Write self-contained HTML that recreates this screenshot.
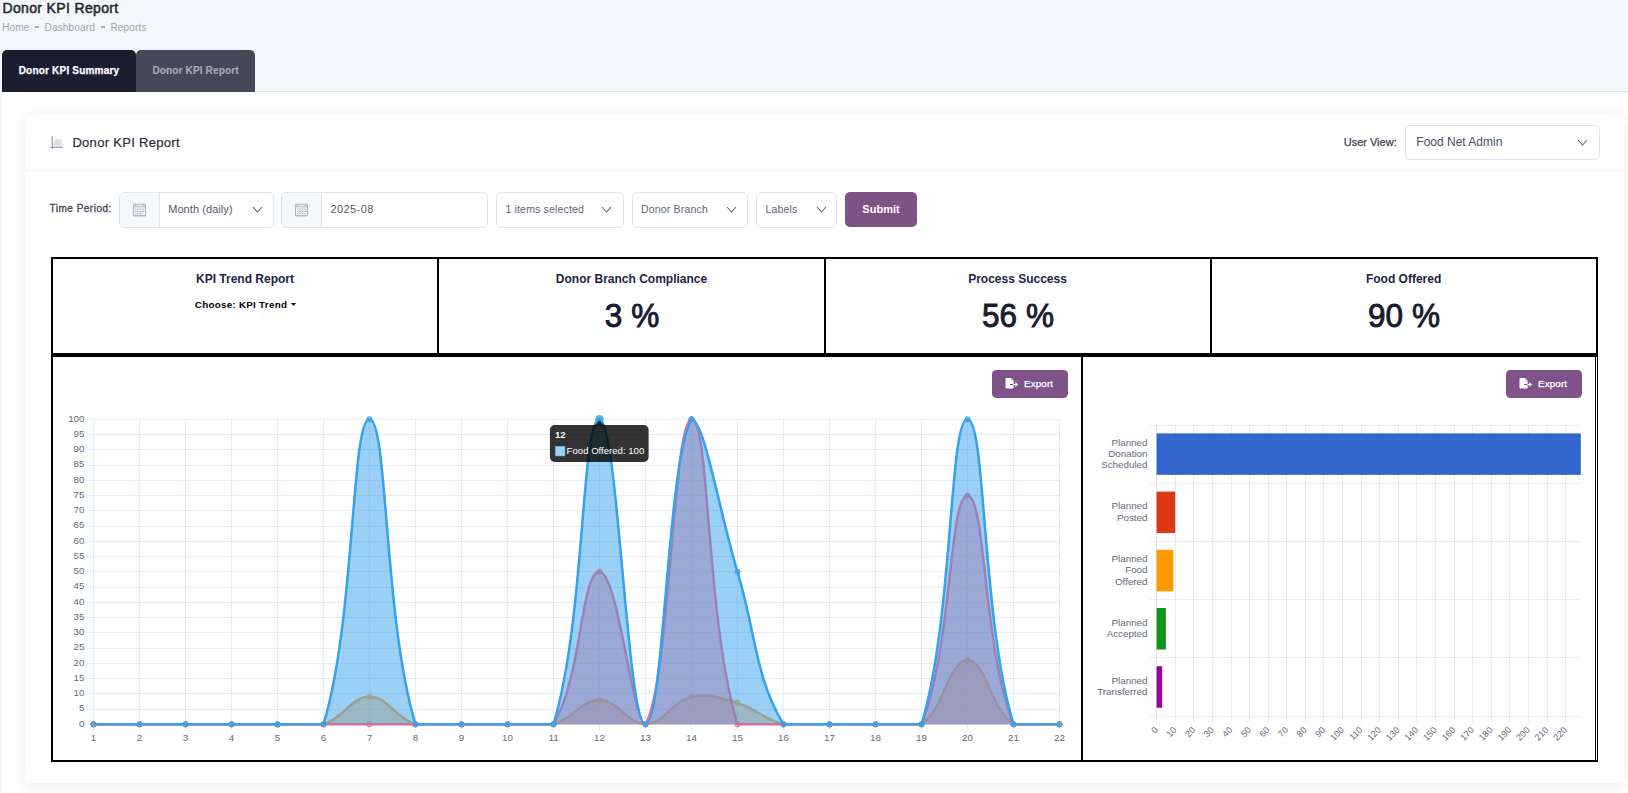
<!DOCTYPE html>
<html><head><meta charset="utf-8"><title>Donor KPI Report</title>
<style>
html,body{margin:0;padding:0;}
body{width:1628px;height:793px;overflow:hidden;position:relative;background:#f3f6fa;font-family:"Liberation Sans",sans-serif;}
.r{position:absolute;}
.t{position:absolute;white-space:nowrap;line-height:1;}
svg text{font-family:"Liberation Sans",sans-serif;}
.tk{font-size:9.8px;fill:#646a7a;}
</style></head><body>
<div class="t" style="top:0.95px;font-size:14.00px;color:#26272f;font-weight:400;letter-spacing:0.35px;left:2.50px;-webkit-text-stroke:0.5px #26272f;">Donor KPI Report</div>
<div class="t" style="top:22.73px;font-size:10.00px;color:#a1a5b7;font-weight:400;letter-spacing:0.05px;left:2.30px;">Home</div>
<div class="r" style="left:34.90px;top:26.40px;width:4.00px;height:1.50px;background:#a8acbd;"></div>
<div class="t" style="top:22.73px;font-size:10.00px;color:#a1a5b7;font-weight:400;letter-spacing:0.15px;left:44.60px;">Dashboard</div>
<div class="r" style="left:101.20px;top:26.40px;width:4.00px;height:1.50px;background:#a8acbd;"></div>
<div class="t" style="top:22.73px;font-size:10.00px;color:#a1a5b7;font-weight:400;letter-spacing:0.12px;left:110.50px;">Reports</div>
<div class="r" style="left:2.00px;top:50.00px;width:134.00px;height:42.00px;background:#1b1e31;border-radius:5px 5px 0 0;"></div>
<div class="r" style="left:136.00px;top:50.00px;width:119.00px;height:42.00px;background:#464859;border-radius:5px 5px 0 0;"></div>
<div class="t" style="top:65.94px;font-size:10.00px;color:#ffffff;font-weight:700;letter-spacing:0.20px;left:2.00px;width:134.00px;text-align:center;-webkit-text-stroke:0.25px #fff;">Donor KPI Summary</div>
<div class="t" style="top:65.94px;font-size:10.00px;color:#a6a7b1;font-weight:700;letter-spacing:0.15px;left:136.10px;width:119.00px;text-align:center;-webkit-text-stroke:0.2px #a6a7b1;">Donor KPI Report</div>
<div class="r" style="left:255.00px;top:91.00px;width:1373.00px;height:1.00px;background:#e3e5ea;"></div>
<div class="r" style="left:2.00px;top:92.00px;width:1626.00px;height:701.00px;background:#ffffff;"></div>
<div class="r" style="left:25.00px;top:115.00px;width:1599.00px;height:668.00px;background:#fff;border-radius:6px;box-shadow:0 3px 18px rgba(0,0,0,0.075);"></div>
<div class="r" style="left:25.00px;top:170.00px;width:1599.00px;height:1.00px;background:#eef1f5;"></div>
<svg class="r" style="left:46px;top:132px" width="22" height="20" viewBox="0 0 22 20">
<path d="M7.4 14.8 V10.6 L10.9 6.3 L15.9 8.2 V14.8 Z" fill="#e0e2e8"/>
<path d="M6.3 4.3 V16.9" fill="none" stroke="#a4a7b9" stroke-width="1.3"/>
<path d="M4.2 15.4 H16.9" fill="none" stroke="#a4a7b9" stroke-width="1.3"/>
</svg>
<div class="t" style="top:135.60px;font-size:13.00px;color:#2b2e3a;font-weight:400;letter-spacing:0.30px;left:72.40px;-webkit-text-stroke:0.2px #2b2e3a;">Donor KPI Report</div>
<div class="t" style="top:136.99px;font-size:11.00px;color:#3f4254;font-weight:400;left:1196.70px;width:200.00px;text-align:right;-webkit-text-stroke:0.25px #3f4254;">User View:</div>
<div class="r" style="left:1405.00px;top:125.00px;width:195.00px;height:34.50px;border:1px solid #e1e3ea;border-radius:5px;box-sizing:border-box;"></div>
<div class="t" style="top:136.14px;font-size:12.00px;color:#4b4f63;font-weight:400;left:1416.30px;">Food Net Admin</div>
<svg class="r" style="left:1576.5px;top:139.0px" width="11" height="7" viewBox="0 0 11 7"><path d="M1 1 L5.5 6.0 L10.0 1" fill="none" stroke="#5e6278" stroke-width="1.1"/></svg>
<div class="t" style="top:203.73px;font-size:10.00px;color:#3f4254;font-weight:400;letter-spacing:0.50px;left:49.50px;-webkit-text-stroke:0.3px #3f4254;">Time Period:</div>
<div class="r" style="left:119.40px;top:192.00px;width:154.30px;height:35.50px;border:1px solid #e1e3ea;border-radius:5px;box-sizing:border-box;"></div><div class="r" style="left:120.40px;top:193.00px;width:39.00px;height:33.50px;background:#f5f8fa;border-radius:4px 0 0 4px;"></div><div class="r" style="left:159.40px;top:192.00px;width:1.00px;height:35.50px;background:#e1e3ea;"></div><svg class="r" style="left:130.0px;top:200.0px" width="20" height="20" viewBox="0 0 20 20">
<rect x="3.5" y="4.3" width="12" height="11.6" rx="0.8" fill="#f8f9fc" stroke="#a9aec0" stroke-width="1"/>
<rect x="3.5" y="4.3" width="12" height="3.2" fill="#c3c7d4"/>
<rect x="6.6" y="5.2" width="5.8" height="1.1" fill="#eceef3"/>
<rect x="5" y="3.2" width="1" height="1.3" fill="#b6bac9"/><rect x="12.9" y="3.2" width="1" height="1.3" fill="#b6bac9"/>
<rect x="3.5" y="15" width="12" height="1.1" fill="#b3b8c8"/>
<g fill="#a3a9bc"><rect x="5.2" y="8.6" width="1.1" height="1.1"/><rect x="6.8" y="8.6" width="1.1" height="1.1"/><rect x="8.4" y="8.6" width="1.1" height="1.1"/><rect x="10.0" y="8.6" width="1.1" height="1.1"/><rect x="11.6" y="8.6" width="1.1" height="1.1"/><rect x="13.2" y="8.6" width="1.1" height="1.1"/><rect x="5.2" y="10.9" width="1.1" height="1.1"/><rect x="6.8" y="10.9" width="1.1" height="1.1"/><rect x="8.4" y="10.9" width="1.1" height="1.1"/><rect x="10.0" y="10.9" width="1.1" height="1.1"/><rect x="11.6" y="10.9" width="1.1" height="1.1"/><rect x="13.2" y="10.9" width="1.1" height="1.1"/><rect x="5.2" y="13.1" width="1.1" height="1.1"/><rect x="6.8" y="13.1" width="1.1" height="1.1"/><rect x="8.4" y="13.1" width="1.1" height="1.1"/><rect x="10.0" y="13.1" width="1.1" height="1.1"/><rect x="11.6" y="13.1" width="1.1" height="1.1"/></g>
</svg><div class="t" style="top:204.09px;font-size:11.00px;color:#55596c;font-weight:400;letter-spacing:0.07px;left:168.20px;">Month (daily)</div>
<svg class="r" style="left:252.0px;top:206.3px" width="11" height="7" viewBox="0 0 11 7"><path d="M1 1 L5.5 6.0 L10.0 1" fill="none" stroke="#5e6278" stroke-width="1.1"/></svg>
<div class="r" style="left:281.00px;top:192.00px;width:206.70px;height:35.50px;border:1px solid #e1e3ea;border-radius:5px;box-sizing:border-box;"></div><div class="r" style="left:282.00px;top:193.00px;width:39.00px;height:33.50px;background:#f5f8fa;border-radius:4px 0 0 4px;"></div><div class="r" style="left:321.00px;top:192.00px;width:1.00px;height:35.50px;background:#e1e3ea;"></div><svg class="r" style="left:291.6px;top:200.0px" width="20" height="20" viewBox="0 0 20 20">
<rect x="3.5" y="4.3" width="12" height="11.6" rx="0.8" fill="#f8f9fc" stroke="#a9aec0" stroke-width="1"/>
<rect x="3.5" y="4.3" width="12" height="3.2" fill="#c3c7d4"/>
<rect x="6.6" y="5.2" width="5.8" height="1.1" fill="#eceef3"/>
<rect x="5" y="3.2" width="1" height="1.3" fill="#b6bac9"/><rect x="12.9" y="3.2" width="1" height="1.3" fill="#b6bac9"/>
<rect x="3.5" y="15" width="12" height="1.1" fill="#b3b8c8"/>
<g fill="#a3a9bc"><rect x="5.2" y="8.6" width="1.1" height="1.1"/><rect x="6.8" y="8.6" width="1.1" height="1.1"/><rect x="8.4" y="8.6" width="1.1" height="1.1"/><rect x="10.0" y="8.6" width="1.1" height="1.1"/><rect x="11.6" y="8.6" width="1.1" height="1.1"/><rect x="13.2" y="8.6" width="1.1" height="1.1"/><rect x="5.2" y="10.9" width="1.1" height="1.1"/><rect x="6.8" y="10.9" width="1.1" height="1.1"/><rect x="8.4" y="10.9" width="1.1" height="1.1"/><rect x="10.0" y="10.9" width="1.1" height="1.1"/><rect x="11.6" y="10.9" width="1.1" height="1.1"/><rect x="13.2" y="10.9" width="1.1" height="1.1"/><rect x="5.2" y="13.1" width="1.1" height="1.1"/><rect x="6.8" y="13.1" width="1.1" height="1.1"/><rect x="8.4" y="13.1" width="1.1" height="1.1"/><rect x="10.0" y="13.1" width="1.1" height="1.1"/><rect x="11.6" y="13.1" width="1.1" height="1.1"/></g>
</svg><div class="t" style="top:204.09px;font-size:11.00px;color:#55596c;font-weight:400;letter-spacing:0.40px;left:330.50px;">2025-08</div>
<div class="r" style="left:496.00px;top:192.00px;width:127.50px;height:35.50px;border:1px solid #e1e3ea;border-radius:5px;box-sizing:border-box;"></div><div class="t" style="top:204.31px;font-size:10.50px;color:#62667a;font-weight:400;letter-spacing:0.18px;left:505.40px;">1 items selected</div><svg class="r" style="left:601.0px;top:206.3px" width="11" height="7" viewBox="0 0 11 7"><path d="M1 1 L5.5 6.0 L10.0 1" fill="none" stroke="#5e6278" stroke-width="1.1"/></svg>
<div class="r" style="left:632.30px;top:192.00px;width:115.30px;height:35.50px;border:1px solid #e1e3ea;border-radius:5px;box-sizing:border-box;"></div><div class="t" style="top:204.31px;font-size:10.50px;color:#62667a;font-weight:400;letter-spacing:0.18px;left:641.00px;">Donor Branch</div><svg class="r" style="left:726.0px;top:206.3px" width="11" height="7" viewBox="0 0 11 7"><path d="M1 1 L5.5 6.0 L10.0 1" fill="none" stroke="#5e6278" stroke-width="1.1"/></svg>
<div class="r" style="left:756.00px;top:192.00px;width:81.40px;height:35.50px;border:1px solid #e1e3ea;border-radius:5px;box-sizing:border-box;"></div><div class="t" style="top:204.31px;font-size:10.50px;color:#62667a;font-weight:400;letter-spacing:0.18px;left:765.40px;">Labels</div><svg class="r" style="left:815.5px;top:206.3px" width="11" height="7" viewBox="0 0 11 7"><path d="M1 1 L5.5 6.0 L10.0 1" fill="none" stroke="#5e6278" stroke-width="1.1"/></svg>
<div class="r" style="left:845.00px;top:192.00px;width:72.00px;height:35.00px;background:#7f5286;border-radius:5px;"></div>
<div class="t" style="top:203.99px;font-size:11.00px;color:#ffffff;font-weight:700;left:845.00px;width:72.00px;text-align:center;">Submit</div>
<div class="r" style="left:51.00px;top:257.00px;width:1547.00px;height:2.00px;background:#000;"></div>
<div class="r" style="left:51.00px;top:353.00px;width:1547.00px;height:2.00px;background:#000;"></div>
<div class="r" style="left:51.00px;top:257.00px;width:2.00px;height:98.00px;background:#000;"></div>
<div class="r" style="left:437.00px;top:257.00px;width:2.00px;height:98.00px;background:#000;"></div>
<div class="r" style="left:824.00px;top:257.00px;width:2.00px;height:98.00px;background:#000;"></div>
<div class="r" style="left:1210.00px;top:257.00px;width:2.00px;height:98.00px;background:#000;"></div>
<div class="r" style="left:1596.00px;top:257.00px;width:2.00px;height:98.00px;background:#000;"></div>
<div class="t" style="top:272.54px;font-size:12.00px;color:#1e2447;font-weight:700;left:55.00px;width:380.00px;text-align:center;">KPI Trend Report</div>
<div class="t" style="top:299.80px;font-size:9.80px;color:#000;font-weight:700;letter-spacing:0.28px;left:91.00px;width:300.00px;text-align:center;">Choose: KPI Trend</div>
<svg class="r" style="left:290px;top:302.2px" width="7" height="5" viewBox="0 0 7 5"><path d="M0.8 1 L6.2 1 L3.5 3.7 Z" fill="#000"/></svg>
<div class="t" style="top:272.74px;font-size:12.00px;color:#1e2447;font-weight:700;left:441.50px;width:380.00px;text-align:center;">Donor Branch Compliance</div>
<div class="t" style="top:298.97px;font-size:33.00px;color:#171a30;font-weight:400;left:441.50px;width:380.00px;text-align:center;-webkit-text-stroke:0.9px #171a30;transform:scaleX(0.955);">3 %</div>
<div class="t" style="top:272.74px;font-size:12.00px;color:#1e2447;font-weight:700;left:827.50px;width:380.00px;text-align:center;">Process Success</div>
<div class="t" style="top:298.97px;font-size:33.00px;color:#171a30;font-weight:400;left:827.50px;width:380.00px;text-align:center;-webkit-text-stroke:0.9px #171a30;transform:scaleX(0.955);">56 %</div>
<div class="t" style="top:272.74px;font-size:12.00px;color:#1e2447;font-weight:700;left:1213.60px;width:380.00px;text-align:center;">Food Offered</div>
<div class="t" style="top:298.97px;font-size:33.00px;color:#171a30;font-weight:400;left:1213.60px;width:380.00px;text-align:center;-webkit-text-stroke:0.9px #171a30;transform:scaleX(0.955);">90 %</div>
<div class="r" style="left:51.00px;top:355.00px;width:2.00px;height:407.00px;background:#000;"></div>
<div class="r" style="left:51.00px;top:355.00px;width:1547.00px;height:2.00px;background:#000;"></div>
<div class="r" style="left:51.00px;top:760.00px;width:1547.00px;height:2.00px;background:#000;"></div>
<div class="r" style="left:1081.00px;top:355.00px;width:2.00px;height:407.00px;background:#000;"></div>
<div class="r" style="left:1595.00px;top:357.00px;width:1.00px;height:404.00px;background:#000;"></div>
<div class="r" style="left:1597.00px;top:355.00px;width:1.00px;height:407.00px;background:#000;"></div>
<div class="r" style="left:992.00px;top:370.00px;width:76.00px;height:28.00px;background:#80528a;border-radius:4.5px;"></div><svg class="r" style="left:1005.0px;top:377px" width="14" height="13" viewBox="0 0 14 13">
<path d="M0.5 1.8 Q0.5 1 1.3 1 H6 L8.6 3.6 V10.8 Q8.6 11.6 7.8 11.6 H1.3 Q0.5 11.6 0.5 10.8 Z" fill="#fff"/>
<path d="M6 1 V3.6 H8.6 Z" fill="#cdb8d2"/>
<rect x="4.9" y="7" width="3.7" height="1" fill="#82548a"/>
<rect x="8.6" y="7" width="2.4" height="1" fill="#fff"/>
<path d="M10.4 4.9 L13 7.5 L10.4 10.1 Z" fill="#fff"/>
</svg><div class="t" style="top:378.90px;font-size:9.80px;color:#ffffff;font-weight:400;letter-spacing:0.15px;left:1024.00px;-webkit-text-stroke:0.25px #fff;">Export</div>
<div class="r" style="left:1506.00px;top:370.00px;width:76.00px;height:28.00px;background:#80528a;border-radius:4.5px;"></div><svg class="r" style="left:1519.0px;top:377px" width="14" height="13" viewBox="0 0 14 13">
<path d="M0.5 1.8 Q0.5 1 1.3 1 H6 L8.6 3.6 V10.8 Q8.6 11.6 7.8 11.6 H1.3 Q0.5 11.6 0.5 10.8 Z" fill="#fff"/>
<path d="M6 1 V3.6 H8.6 Z" fill="#cdb8d2"/>
<rect x="4.9" y="7" width="3.7" height="1" fill="#82548a"/>
<rect x="8.6" y="7" width="2.4" height="1" fill="#fff"/>
<path d="M10.4 4.9 L13 7.5 L10.4 10.1 Z" fill="#fff"/>
</svg><div class="t" style="top:378.90px;font-size:9.80px;color:#ffffff;font-weight:400;letter-spacing:0.15px;left:1538.00px;-webkit-text-stroke:0.25px #fff;">Export</div>
<svg class="r" style="left:0;top:0" width="1628" height="793" viewBox="0 0 1628 793">
<defs><clipPath id="ca"><rect x="93.5" y="400" width="970" height="324.3"/></clipPath></defs>
<line x1="87" y1="724.5" x2="1059.5" y2="724.5" stroke="#e5ecf3" stroke-width="1"/>
<line x1="87" y1="709.5" x2="1059.5" y2="709.5" stroke="#e5ecf3" stroke-width="1"/>
<line x1="87" y1="693.5" x2="1059.5" y2="693.5" stroke="#e5ecf3" stroke-width="1"/>
<line x1="87" y1="678.5" x2="1059.5" y2="678.5" stroke="#e5ecf3" stroke-width="1"/>
<line x1="87" y1="663.5" x2="1059.5" y2="663.5" stroke="#e5ecf3" stroke-width="1"/>
<line x1="87" y1="648.5" x2="1059.5" y2="648.5" stroke="#e5ecf3" stroke-width="1"/>
<line x1="87" y1="632.5" x2="1059.5" y2="632.5" stroke="#e5ecf3" stroke-width="1"/>
<line x1="87" y1="617.5" x2="1059.5" y2="617.5" stroke="#e5ecf3" stroke-width="1"/>
<line x1="87" y1="602.5" x2="1059.5" y2="602.5" stroke="#e5ecf3" stroke-width="1"/>
<line x1="87" y1="587.5" x2="1059.5" y2="587.5" stroke="#e5ecf3" stroke-width="1"/>
<line x1="87" y1="571.5" x2="1059.5" y2="571.5" stroke="#e5ecf3" stroke-width="1"/>
<line x1="87" y1="556.5" x2="1059.5" y2="556.5" stroke="#e5ecf3" stroke-width="1"/>
<line x1="87" y1="541.5" x2="1059.5" y2="541.5" stroke="#e5ecf3" stroke-width="1"/>
<line x1="87" y1="526.5" x2="1059.5" y2="526.5" stroke="#e5ecf3" stroke-width="1"/>
<line x1="87" y1="510.5" x2="1059.5" y2="510.5" stroke="#e5ecf3" stroke-width="1"/>
<line x1="87" y1="495.5" x2="1059.5" y2="495.5" stroke="#e5ecf3" stroke-width="1"/>
<line x1="87" y1="480.5" x2="1059.5" y2="480.5" stroke="#e5ecf3" stroke-width="1"/>
<line x1="87" y1="465.5" x2="1059.5" y2="465.5" stroke="#e5ecf3" stroke-width="1"/>
<line x1="87" y1="449.5" x2="1059.5" y2="449.5" stroke="#e5ecf3" stroke-width="1"/>
<line x1="87" y1="434.5" x2="1059.5" y2="434.5" stroke="#e5ecf3" stroke-width="1"/>
<line x1="87" y1="419.5" x2="1059.5" y2="419.5" stroke="#e5ecf3" stroke-width="1"/>
<line x1="93.5" y1="419.3" x2="93.5" y2="730.5" stroke="#e5ecf3" stroke-width="1"/>
<line x1="139.5" y1="419.3" x2="139.5" y2="730.5" stroke="#e5ecf3" stroke-width="1"/>
<line x1="185.5" y1="419.3" x2="185.5" y2="730.5" stroke="#e5ecf3" stroke-width="1"/>
<line x1="231.5" y1="419.3" x2="231.5" y2="730.5" stroke="#e5ecf3" stroke-width="1"/>
<line x1="277.5" y1="419.3" x2="277.5" y2="730.5" stroke="#e5ecf3" stroke-width="1"/>
<line x1="323.5" y1="419.3" x2="323.5" y2="730.5" stroke="#e5ecf3" stroke-width="1"/>
<line x1="369.5" y1="419.3" x2="369.5" y2="730.5" stroke="#e5ecf3" stroke-width="1"/>
<line x1="415.5" y1="419.3" x2="415.5" y2="730.5" stroke="#e5ecf3" stroke-width="1"/>
<line x1="461.5" y1="419.3" x2="461.5" y2="730.5" stroke="#e5ecf3" stroke-width="1"/>
<line x1="507.5" y1="419.3" x2="507.5" y2="730.5" stroke="#e5ecf3" stroke-width="1"/>
<line x1="553.5" y1="419.3" x2="553.5" y2="730.5" stroke="#e5ecf3" stroke-width="1"/>
<line x1="599.5" y1="419.3" x2="599.5" y2="730.5" stroke="#e5ecf3" stroke-width="1"/>
<line x1="645.5" y1="419.3" x2="645.5" y2="730.5" stroke="#e5ecf3" stroke-width="1"/>
<line x1="691.5" y1="419.3" x2="691.5" y2="730.5" stroke="#e5ecf3" stroke-width="1"/>
<line x1="737.5" y1="419.3" x2="737.5" y2="730.5" stroke="#e5ecf3" stroke-width="1"/>
<line x1="783.5" y1="419.3" x2="783.5" y2="730.5" stroke="#e5ecf3" stroke-width="1"/>
<line x1="829.5" y1="419.3" x2="829.5" y2="730.5" stroke="#e5ecf3" stroke-width="1"/>
<line x1="875.5" y1="419.3" x2="875.5" y2="730.5" stroke="#e5ecf3" stroke-width="1"/>
<line x1="921.5" y1="419.3" x2="921.5" y2="730.5" stroke="#e5ecf3" stroke-width="1"/>
<line x1="967.5" y1="419.3" x2="967.5" y2="730.5" stroke="#e5ecf3" stroke-width="1"/>
<line x1="1013.5" y1="419.3" x2="1013.5" y2="730.5" stroke="#e5ecf3" stroke-width="1"/>
<line x1="1059.5" y1="419.3" x2="1059.5" y2="730.5" stroke="#e5ecf3" stroke-width="1"/>
<text x="84.5" y="726.70" text-anchor="end" class="tk">0</text>
<text x="84.5" y="711.45" text-anchor="end" class="tk">5</text>
<text x="84.5" y="696.20" text-anchor="end" class="tk">10</text>
<text x="84.5" y="680.95" text-anchor="end" class="tk">15</text>
<text x="84.5" y="665.70" text-anchor="end" class="tk">20</text>
<text x="84.5" y="650.45" text-anchor="end" class="tk">25</text>
<text x="84.5" y="635.20" text-anchor="end" class="tk">30</text>
<text x="84.5" y="619.95" text-anchor="end" class="tk">35</text>
<text x="84.5" y="604.70" text-anchor="end" class="tk">40</text>
<text x="84.5" y="589.45" text-anchor="end" class="tk">45</text>
<text x="84.5" y="574.20" text-anchor="end" class="tk">50</text>
<text x="84.5" y="558.95" text-anchor="end" class="tk">55</text>
<text x="84.5" y="543.70" text-anchor="end" class="tk">60</text>
<text x="84.5" y="528.45" text-anchor="end" class="tk">65</text>
<text x="84.5" y="513.20" text-anchor="end" class="tk">70</text>
<text x="84.5" y="497.95" text-anchor="end" class="tk">75</text>
<text x="84.5" y="482.70" text-anchor="end" class="tk">80</text>
<text x="84.5" y="467.45" text-anchor="end" class="tk">85</text>
<text x="84.5" y="452.20" text-anchor="end" class="tk">90</text>
<text x="84.5" y="436.95" text-anchor="end" class="tk">95</text>
<text x="84.5" y="421.70" text-anchor="end" class="tk">100</text>
<text x="93.50" y="740.8" text-anchor="middle" class="tk">1</text>
<text x="139.50" y="740.8" text-anchor="middle" class="tk">2</text>
<text x="185.50" y="740.8" text-anchor="middle" class="tk">3</text>
<text x="231.50" y="740.8" text-anchor="middle" class="tk">4</text>
<text x="277.50" y="740.8" text-anchor="middle" class="tk">5</text>
<text x="323.50" y="740.8" text-anchor="middle" class="tk">6</text>
<text x="369.50" y="740.8" text-anchor="middle" class="tk">7</text>
<text x="415.50" y="740.8" text-anchor="middle" class="tk">8</text>
<text x="461.50" y="740.8" text-anchor="middle" class="tk">9</text>
<text x="507.50" y="740.8" text-anchor="middle" class="tk">10</text>
<text x="553.50" y="740.8" text-anchor="middle" class="tk">11</text>
<text x="599.50" y="740.8" text-anchor="middle" class="tk">12</text>
<text x="645.50" y="740.8" text-anchor="middle" class="tk">13</text>
<text x="691.50" y="740.8" text-anchor="middle" class="tk">14</text>
<text x="737.50" y="740.8" text-anchor="middle" class="tk">15</text>
<text x="783.50" y="740.8" text-anchor="middle" class="tk">16</text>
<text x="829.50" y="740.8" text-anchor="middle" class="tk">17</text>
<text x="875.50" y="740.8" text-anchor="middle" class="tk">18</text>
<text x="921.50" y="740.8" text-anchor="middle" class="tk">19</text>
<text x="967.50" y="740.8" text-anchor="middle" class="tk">20</text>
<text x="1013.50" y="740.8" text-anchor="middle" class="tk">21</text>
<text x="1059.50" y="740.8" text-anchor="middle" class="tk">22</text>
<path d="M93.50 724.30 C111.90 724.30 121.10 724.30 139.50 724.30 C157.90 724.30 167.10 724.30 185.50 724.30 C203.90 724.30 213.10 724.30 231.50 724.30 C249.90 724.30 259.10 724.30 277.50 724.30 C295.90 724.30 306.50 724.30 323.50 724.30 C343.30 718.39 351.10 696.85 369.50 696.85 C387.90 696.85 395.70 718.39 415.50 724.30 C432.50 724.30 443.10 724.30 461.50 724.30 C479.90 724.30 489.10 724.30 507.50 724.30 C525.90 724.30 536.24 724.30 553.50 724.30 C573.04 719.12 581.10 699.90 599.50 699.90 C617.90 699.90 627.36 724.30 645.50 724.30 C664.16 723.68 671.78 701.43 691.50 696.85 C708.58 692.89 719.92 697.70 737.50 702.95 C756.72 708.68 764.20 719.82 783.50 724.30 C801.00 724.30 811.10 724.30 829.50 724.30 C847.90 724.30 857.10 724.30 875.50 724.30 C893.90 724.30 907.94 724.30 921.50 724.30 C944.74 708.12 949.10 660.25 967.50 660.25 C985.90 660.25 990.26 708.12 1013.50 724.30 C1027.06 724.30 1041.10 724.30 1059.50 724.30 L1059.50 724.30 L93.50 724.30 Z" fill="rgba(255,159,64,0.5)"/>
<path d="M93.50 724.30 C111.90 724.30 121.10 724.30 139.50 724.30 C157.90 724.30 167.10 724.30 185.50 724.30 C203.90 724.30 213.10 724.30 231.50 724.30 C249.90 724.30 259.10 724.30 277.50 724.30 C295.90 724.30 306.50 724.30 323.50 724.30 C343.30 718.39 351.10 696.85 369.50 696.85 C387.90 696.85 395.70 718.39 415.50 724.30 C432.50 724.30 443.10 724.30 461.50 724.30 C479.90 724.30 489.10 724.30 507.50 724.30 C525.90 724.30 536.24 724.30 553.50 724.30 C573.04 719.12 581.10 699.90 599.50 699.90 C617.90 699.90 627.36 724.30 645.50 724.30 C664.16 723.68 671.78 701.43 691.50 696.85 C708.58 692.89 719.92 697.70 737.50 702.95 C756.72 708.68 764.20 719.82 783.50 724.30 C801.00 724.30 811.10 724.30 829.50 724.30 C847.90 724.30 857.10 724.30 875.50 724.30 C893.90 724.30 907.94 724.30 921.50 724.30 C944.74 708.12 949.10 660.25 967.50 660.25 C985.90 660.25 990.26 708.12 1013.50 724.30 C1027.06 724.30 1041.10 724.30 1059.50 724.30" fill="none" stroke="rgb(255,159,64)" stroke-width="2.5" stroke-linejoin="round"/>
<circle cx="93.50" cy="724.30" r="2.6" fill="rgba(255,159,64,0.5)" stroke="rgb(255,159,64)" stroke-width="1"/>
<circle cx="139.50" cy="724.30" r="2.6" fill="rgba(255,159,64,0.5)" stroke="rgb(255,159,64)" stroke-width="1"/>
<circle cx="185.50" cy="724.30" r="2.6" fill="rgba(255,159,64,0.5)" stroke="rgb(255,159,64)" stroke-width="1"/>
<circle cx="231.50" cy="724.30" r="2.6" fill="rgba(255,159,64,0.5)" stroke="rgb(255,159,64)" stroke-width="1"/>
<circle cx="277.50" cy="724.30" r="2.6" fill="rgba(255,159,64,0.5)" stroke="rgb(255,159,64)" stroke-width="1"/>
<circle cx="323.50" cy="724.30" r="2.6" fill="rgba(255,159,64,0.5)" stroke="rgb(255,159,64)" stroke-width="1"/>
<circle cx="369.50" cy="696.85" r="2.6" fill="rgba(255,159,64,0.5)" stroke="rgb(255,159,64)" stroke-width="1"/>
<circle cx="415.50" cy="724.30" r="2.6" fill="rgba(255,159,64,0.5)" stroke="rgb(255,159,64)" stroke-width="1"/>
<circle cx="461.50" cy="724.30" r="2.6" fill="rgba(255,159,64,0.5)" stroke="rgb(255,159,64)" stroke-width="1"/>
<circle cx="507.50" cy="724.30" r="2.6" fill="rgba(255,159,64,0.5)" stroke="rgb(255,159,64)" stroke-width="1"/>
<circle cx="553.50" cy="724.30" r="2.6" fill="rgba(255,159,64,0.5)" stroke="rgb(255,159,64)" stroke-width="1"/>
<circle cx="599.50" cy="699.90" r="2.6" fill="rgba(255,159,64,0.5)" stroke="rgb(255,159,64)" stroke-width="1"/>
<circle cx="645.50" cy="724.30" r="2.6" fill="rgba(255,159,64,0.5)" stroke="rgb(255,159,64)" stroke-width="1"/>
<circle cx="691.50" cy="696.85" r="2.6" fill="rgba(255,159,64,0.5)" stroke="rgb(255,159,64)" stroke-width="1"/>
<circle cx="737.50" cy="702.95" r="2.6" fill="rgba(255,159,64,0.5)" stroke="rgb(255,159,64)" stroke-width="1"/>
<circle cx="783.50" cy="724.30" r="2.6" fill="rgba(255,159,64,0.5)" stroke="rgb(255,159,64)" stroke-width="1"/>
<circle cx="829.50" cy="724.30" r="2.6" fill="rgba(255,159,64,0.5)" stroke="rgb(255,159,64)" stroke-width="1"/>
<circle cx="875.50" cy="724.30" r="2.6" fill="rgba(255,159,64,0.5)" stroke="rgb(255,159,64)" stroke-width="1"/>
<circle cx="921.50" cy="724.30" r="2.6" fill="rgba(255,159,64,0.5)" stroke="rgb(255,159,64)" stroke-width="1"/>
<circle cx="967.50" cy="660.25" r="2.6" fill="rgba(255,159,64,0.5)" stroke="rgb(255,159,64)" stroke-width="1"/>
<circle cx="1013.50" cy="724.30" r="2.6" fill="rgba(255,159,64,0.5)" stroke="rgb(255,159,64)" stroke-width="1"/>
<circle cx="1059.50" cy="724.30" r="2.6" fill="rgba(255,159,64,0.5)" stroke="rgb(255,159,64)" stroke-width="1"/>
<path d="M93.50 724.30 C111.90 724.30 121.10 724.30 139.50 724.30 C157.90 724.30 167.10 724.30 185.50 724.30 C203.90 724.30 213.10 724.30 231.50 724.30 C249.90 724.30 259.10 724.30 277.50 724.30 C295.90 724.30 305.10 724.30 323.50 724.30 C341.90 724.30 351.10 724.30 369.50 724.30 C387.90 724.30 397.10 724.30 415.50 724.30 C433.90 724.30 443.10 724.30 461.50 724.30 C479.90 724.30 489.10 724.30 507.50 724.30 C525.90 724.30 545.25 724.30 553.50 724.30 C582.05 676.97 581.10 571.80 599.50 571.80 C617.90 571.80 632.97 724.30 645.50 724.30 C669.77 684.07 673.10 419.30 691.50 419.30 C709.90 419.30 705.48 618.13 737.50 724.30 C742.28 724.30 765.10 724.30 783.50 724.30 C801.90 724.30 811.10 724.30 829.50 724.30 C847.90 724.30 857.10 724.30 875.50 724.30 C893.90 724.30 915.44 724.30 921.50 724.30 C952.24 647.87 949.10 495.55 967.50 495.55 C985.90 495.55 982.76 647.87 1013.50 724.30 C1019.56 724.30 1041.10 724.30 1059.50 724.30 L1059.50 724.30 L93.50 724.30 Z" fill="rgba(255,99,132,0.5)"/>
<path d="M93.50 724.30 C111.90 724.30 121.10 724.30 139.50 724.30 C157.90 724.30 167.10 724.30 185.50 724.30 C203.90 724.30 213.10 724.30 231.50 724.30 C249.90 724.30 259.10 724.30 277.50 724.30 C295.90 724.30 305.10 724.30 323.50 724.30 C341.90 724.30 351.10 724.30 369.50 724.30 C387.90 724.30 397.10 724.30 415.50 724.30 C433.90 724.30 443.10 724.30 461.50 724.30 C479.90 724.30 489.10 724.30 507.50 724.30 C525.90 724.30 545.25 724.30 553.50 724.30 C582.05 676.97 581.10 571.80 599.50 571.80 C617.90 571.80 632.97 724.30 645.50 724.30 C669.77 684.07 673.10 419.30 691.50 419.30 C709.90 419.30 705.48 618.13 737.50 724.30 C742.28 724.30 765.10 724.30 783.50 724.30 C801.90 724.30 811.10 724.30 829.50 724.30 C847.90 724.30 857.10 724.30 875.50 724.30 C893.90 724.30 915.44 724.30 921.50 724.30 C952.24 647.87 949.10 495.55 967.50 495.55 C985.90 495.55 982.76 647.87 1013.50 724.30 C1019.56 724.30 1041.10 724.30 1059.50 724.30" fill="none" stroke="rgb(255,99,132)" stroke-width="2.5" stroke-linejoin="round"/>
<circle cx="93.50" cy="724.30" r="2.6" fill="rgba(255,99,132,0.5)" stroke="rgb(255,99,132)" stroke-width="1"/>
<circle cx="139.50" cy="724.30" r="2.6" fill="rgba(255,99,132,0.5)" stroke="rgb(255,99,132)" stroke-width="1"/>
<circle cx="185.50" cy="724.30" r="2.6" fill="rgba(255,99,132,0.5)" stroke="rgb(255,99,132)" stroke-width="1"/>
<circle cx="231.50" cy="724.30" r="2.6" fill="rgba(255,99,132,0.5)" stroke="rgb(255,99,132)" stroke-width="1"/>
<circle cx="277.50" cy="724.30" r="2.6" fill="rgba(255,99,132,0.5)" stroke="rgb(255,99,132)" stroke-width="1"/>
<circle cx="323.50" cy="724.30" r="2.6" fill="rgba(255,99,132,0.5)" stroke="rgb(255,99,132)" stroke-width="1"/>
<circle cx="369.50" cy="724.30" r="2.6" fill="rgba(255,99,132,0.5)" stroke="rgb(255,99,132)" stroke-width="1"/>
<circle cx="415.50" cy="724.30" r="2.6" fill="rgba(255,99,132,0.5)" stroke="rgb(255,99,132)" stroke-width="1"/>
<circle cx="461.50" cy="724.30" r="2.6" fill="rgba(255,99,132,0.5)" stroke="rgb(255,99,132)" stroke-width="1"/>
<circle cx="507.50" cy="724.30" r="2.6" fill="rgba(255,99,132,0.5)" stroke="rgb(255,99,132)" stroke-width="1"/>
<circle cx="553.50" cy="724.30" r="2.6" fill="rgba(255,99,132,0.5)" stroke="rgb(255,99,132)" stroke-width="1"/>
<circle cx="599.50" cy="571.80" r="2.6" fill="rgba(255,99,132,0.5)" stroke="rgb(255,99,132)" stroke-width="1"/>
<circle cx="645.50" cy="724.30" r="2.6" fill="rgba(255,99,132,0.5)" stroke="rgb(255,99,132)" stroke-width="1"/>
<circle cx="691.50" cy="419.30" r="2.6" fill="rgba(255,99,132,0.5)" stroke="rgb(255,99,132)" stroke-width="1"/>
<circle cx="737.50" cy="724.30" r="2.6" fill="rgba(255,99,132,0.5)" stroke="rgb(255,99,132)" stroke-width="1"/>
<circle cx="783.50" cy="724.30" r="2.6" fill="rgba(255,99,132,0.5)" stroke="rgb(255,99,132)" stroke-width="1"/>
<circle cx="829.50" cy="724.30" r="2.6" fill="rgba(255,99,132,0.5)" stroke="rgb(255,99,132)" stroke-width="1"/>
<circle cx="875.50" cy="724.30" r="2.6" fill="rgba(255,99,132,0.5)" stroke="rgb(255,99,132)" stroke-width="1"/>
<circle cx="921.50" cy="724.30" r="2.6" fill="rgba(255,99,132,0.5)" stroke="rgb(255,99,132)" stroke-width="1"/>
<circle cx="967.50" cy="495.55" r="2.6" fill="rgba(255,99,132,0.5)" stroke="rgb(255,99,132)" stroke-width="1"/>
<circle cx="1013.50" cy="724.30" r="2.6" fill="rgba(255,99,132,0.5)" stroke="rgb(255,99,132)" stroke-width="1"/>
<circle cx="1059.50" cy="724.30" r="2.6" fill="rgba(255,99,132,0.5)" stroke="rgb(255,99,132)" stroke-width="1"/>
<path d="M93.50 724.30 C111.90 724.30 121.10 724.30 139.50 724.30 C157.90 724.30 167.10 724.30 185.50 724.30 C203.90 724.30 213.10 724.30 231.50 724.30 C249.90 724.30 259.10 724.30 277.50 724.30 C295.90 724.30 318.72 724.30 323.50 724.30 C355.52 618.13 351.10 419.30 369.50 419.30 C387.90 419.30 383.48 618.13 415.50 724.30 C420.28 724.30 443.10 724.30 461.50 724.30 C479.90 724.30 489.10 724.30 507.50 724.30 C525.90 724.30 548.72 724.30 553.50 724.30 C585.52 618.13 581.10 419.30 599.50 419.30 C617.90 419.30 627.10 724.30 645.50 724.30 C663.90 724.30 667.23 459.53 691.50 419.30 C704.03 419.30 719.10 510.80 737.50 571.80 C755.90 632.80 754.95 676.97 783.50 724.30 C791.75 724.30 811.10 724.30 829.50 724.30 C847.90 724.30 857.10 724.30 875.50 724.30 C893.90 724.30 916.72 724.30 921.50 724.30 C953.52 618.13 949.10 419.30 967.50 419.30 C985.90 419.30 981.48 618.13 1013.50 724.30 C1018.28 724.30 1041.10 724.30 1059.50 724.30 L1059.50 724.30 L93.50 724.30 Z" fill="rgba(54,162,235,0.5)"/>
<path d="M93.50 724.30 C111.90 724.30 121.10 724.30 139.50 724.30 C157.90 724.30 167.10 724.30 185.50 724.30 C203.90 724.30 213.10 724.30 231.50 724.30 C249.90 724.30 259.10 724.30 277.50 724.30 C295.90 724.30 318.72 724.30 323.50 724.30 C355.52 618.13 351.10 419.30 369.50 419.30 C387.90 419.30 383.48 618.13 415.50 724.30 C420.28 724.30 443.10 724.30 461.50 724.30 C479.90 724.30 489.10 724.30 507.50 724.30 C525.90 724.30 548.72 724.30 553.50 724.30 C585.52 618.13 581.10 419.30 599.50 419.30 C617.90 419.30 627.10 724.30 645.50 724.30 C663.90 724.30 667.23 459.53 691.50 419.30 C704.03 419.30 719.10 510.80 737.50 571.80 C755.90 632.80 754.95 676.97 783.50 724.30 C791.75 724.30 811.10 724.30 829.50 724.30 C847.90 724.30 857.10 724.30 875.50 724.30 C893.90 724.30 916.72 724.30 921.50 724.30 C953.52 618.13 949.10 419.30 967.50 419.30 C985.90 419.30 981.48 618.13 1013.50 724.30 C1018.28 724.30 1041.10 724.30 1059.50 724.30" fill="none" stroke="rgb(54,162,235)" stroke-width="2.5" stroke-linejoin="round"/>
<circle cx="93.50" cy="724.30" r="2.6" fill="rgba(54,162,235,0.5)" stroke="rgb(54,162,235)" stroke-width="1"/>
<circle cx="139.50" cy="724.30" r="2.6" fill="rgba(54,162,235,0.5)" stroke="rgb(54,162,235)" stroke-width="1"/>
<circle cx="185.50" cy="724.30" r="2.6" fill="rgba(54,162,235,0.5)" stroke="rgb(54,162,235)" stroke-width="1"/>
<circle cx="231.50" cy="724.30" r="2.6" fill="rgba(54,162,235,0.5)" stroke="rgb(54,162,235)" stroke-width="1"/>
<circle cx="277.50" cy="724.30" r="2.6" fill="rgba(54,162,235,0.5)" stroke="rgb(54,162,235)" stroke-width="1"/>
<circle cx="323.50" cy="724.30" r="2.6" fill="rgba(54,162,235,0.5)" stroke="rgb(54,162,235)" stroke-width="1"/>
<circle cx="369.50" cy="419.30" r="2.6" fill="rgba(54,162,235,0.5)" stroke="rgb(54,162,235)" stroke-width="1"/>
<circle cx="415.50" cy="724.30" r="2.6" fill="rgba(54,162,235,0.5)" stroke="rgb(54,162,235)" stroke-width="1"/>
<circle cx="461.50" cy="724.30" r="2.6" fill="rgba(54,162,235,0.5)" stroke="rgb(54,162,235)" stroke-width="1"/>
<circle cx="507.50" cy="724.30" r="2.6" fill="rgba(54,162,235,0.5)" stroke="rgb(54,162,235)" stroke-width="1"/>
<circle cx="553.50" cy="724.30" r="2.6" fill="rgba(54,162,235,0.5)" stroke="rgb(54,162,235)" stroke-width="1"/>
<circle cx="599.50" cy="419.30" r="2.6" fill="rgba(54,162,235,0.5)" stroke="rgb(54,162,235)" stroke-width="1"/>
<circle cx="645.50" cy="724.30" r="2.6" fill="rgba(54,162,235,0.5)" stroke="rgb(54,162,235)" stroke-width="1"/>
<circle cx="691.50" cy="419.30" r="2.6" fill="rgba(54,162,235,0.5)" stroke="rgb(54,162,235)" stroke-width="1"/>
<circle cx="737.50" cy="571.80" r="2.6" fill="rgba(54,162,235,0.5)" stroke="rgb(54,162,235)" stroke-width="1"/>
<circle cx="783.50" cy="724.30" r="2.6" fill="rgba(54,162,235,0.5)" stroke="rgb(54,162,235)" stroke-width="1"/>
<circle cx="829.50" cy="724.30" r="2.6" fill="rgba(54,162,235,0.5)" stroke="rgb(54,162,235)" stroke-width="1"/>
<circle cx="875.50" cy="724.30" r="2.6" fill="rgba(54,162,235,0.5)" stroke="rgb(54,162,235)" stroke-width="1"/>
<circle cx="921.50" cy="724.30" r="2.6" fill="rgba(54,162,235,0.5)" stroke="rgb(54,162,235)" stroke-width="1"/>
<circle cx="967.50" cy="419.30" r="2.6" fill="rgba(54,162,235,0.5)" stroke="rgb(54,162,235)" stroke-width="1"/>
<circle cx="1013.50" cy="724.30" r="2.6" fill="rgba(54,162,235,0.5)" stroke="rgb(54,162,235)" stroke-width="1"/>
<circle cx="1059.50" cy="724.30" r="2.6" fill="rgba(54,162,235,0.5)" stroke="rgb(54,162,235)" stroke-width="1"/>
<circle cx="599.5" cy="419.3" r="3.8" fill="rgba(54,162,235,0.5)" stroke="#36a2eb" stroke-width="1"/>
<path d="M594.5 425.5 L599.5 420.5 L604.5 425.5 Z" fill="rgba(0,0,0,0.8)"/>
<rect x="549.9" y="425" width="98.7" height="37" rx="4.8" fill="rgba(0,0,0,0.8)"/>
<text x="555" y="437.8" fill="#fff" font-weight="700" font-size="9.6">12</text>
<rect x="555.3" y="446.3" width="9.6" height="9.6" fill="#fff" stroke="#36a2eb" stroke-width="0.8"/>
<rect x="556.1" y="447.1" width="8" height="8" fill="rgba(54,162,235,0.5)"/>
<text x="566.6" y="453.8" fill="#fff" font-size="9.6">Food Offered: 100</text>
<line x1="1150.2" y1="425.50" x2="1580.80" y2="425.50" stroke="#e5ecf3" stroke-width="1"/>
<line x1="1150.2" y1="483.50" x2="1580.80" y2="483.50" stroke="#e5ecf3" stroke-width="1"/>
<line x1="1150.2" y1="541.50" x2="1580.80" y2="541.50" stroke="#e5ecf3" stroke-width="1"/>
<line x1="1150.2" y1="599.50" x2="1580.80" y2="599.50" stroke="#e5ecf3" stroke-width="1"/>
<line x1="1150.2" y1="657.50" x2="1580.80" y2="657.50" stroke="#e5ecf3" stroke-width="1"/>
<line x1="1150.2" y1="716.50" x2="1580.80" y2="716.50" stroke="#e5ecf3" stroke-width="1"/>
<line x1="1156.50" y1="425.30" x2="1156.50" y2="722.3" stroke="#e1e3e8" stroke-width="1"/>
<text class="tk" transform="translate(1156.30 728.3) rotate(-45)" text-anchor="end" dy="3.2" style="font-size:9px">0</text>
<line x1="1175.50" y1="425.30" x2="1175.50" y2="722.3" stroke="#e5ecf3" stroke-width="1"/>
<text class="tk" transform="translate(1174.89 728.3) rotate(-45)" text-anchor="end" dy="3.2" style="font-size:9px">10</text>
<line x1="1193.50" y1="425.30" x2="1193.50" y2="722.3" stroke="#e5ecf3" stroke-width="1"/>
<text class="tk" transform="translate(1193.48 728.3) rotate(-45)" text-anchor="end" dy="3.2" style="font-size:9px">20</text>
<line x1="1212.50" y1="425.30" x2="1212.50" y2="722.3" stroke="#e5ecf3" stroke-width="1"/>
<text class="tk" transform="translate(1212.07 728.3) rotate(-45)" text-anchor="end" dy="3.2" style="font-size:9px">30</text>
<line x1="1231.50" y1="425.30" x2="1231.50" y2="722.3" stroke="#e5ecf3" stroke-width="1"/>
<text class="tk" transform="translate(1230.66 728.3) rotate(-45)" text-anchor="end" dy="3.2" style="font-size:9px">40</text>
<line x1="1249.50" y1="425.30" x2="1249.50" y2="722.3" stroke="#e5ecf3" stroke-width="1"/>
<text class="tk" transform="translate(1249.25 728.3) rotate(-45)" text-anchor="end" dy="3.2" style="font-size:9px">50</text>
<line x1="1268.50" y1="425.30" x2="1268.50" y2="722.3" stroke="#e5ecf3" stroke-width="1"/>
<text class="tk" transform="translate(1267.84 728.3) rotate(-45)" text-anchor="end" dy="3.2" style="font-size:9px">60</text>
<line x1="1286.50" y1="425.30" x2="1286.50" y2="722.3" stroke="#e5ecf3" stroke-width="1"/>
<text class="tk" transform="translate(1286.43 728.3) rotate(-45)" text-anchor="end" dy="3.2" style="font-size:9px">70</text>
<line x1="1305.50" y1="425.30" x2="1305.50" y2="722.3" stroke="#e5ecf3" stroke-width="1"/>
<text class="tk" transform="translate(1305.02 728.3) rotate(-45)" text-anchor="end" dy="3.2" style="font-size:9px">80</text>
<line x1="1323.50" y1="425.30" x2="1323.50" y2="722.3" stroke="#e5ecf3" stroke-width="1"/>
<text class="tk" transform="translate(1323.61 728.3) rotate(-45)" text-anchor="end" dy="3.2" style="font-size:9px">90</text>
<line x1="1342.50" y1="425.30" x2="1342.50" y2="722.3" stroke="#e5ecf3" stroke-width="1"/>
<text class="tk" transform="translate(1342.20 728.3) rotate(-45)" text-anchor="end" dy="3.2" style="font-size:9px">100</text>
<line x1="1361.50" y1="425.30" x2="1361.50" y2="722.3" stroke="#e5ecf3" stroke-width="1"/>
<text class="tk" transform="translate(1360.79 728.3) rotate(-45)" text-anchor="end" dy="3.2" style="font-size:9px">110</text>
<line x1="1379.50" y1="425.30" x2="1379.50" y2="722.3" stroke="#e5ecf3" stroke-width="1"/>
<text class="tk" transform="translate(1379.38 728.3) rotate(-45)" text-anchor="end" dy="3.2" style="font-size:9px">120</text>
<line x1="1398.50" y1="425.30" x2="1398.50" y2="722.3" stroke="#e5ecf3" stroke-width="1"/>
<text class="tk" transform="translate(1397.97 728.3) rotate(-45)" text-anchor="end" dy="3.2" style="font-size:9px">130</text>
<line x1="1416.50" y1="425.30" x2="1416.50" y2="722.3" stroke="#e5ecf3" stroke-width="1"/>
<text class="tk" transform="translate(1416.56 728.3) rotate(-45)" text-anchor="end" dy="3.2" style="font-size:9px">140</text>
<line x1="1435.50" y1="425.30" x2="1435.50" y2="722.3" stroke="#e5ecf3" stroke-width="1"/>
<text class="tk" transform="translate(1435.15 728.3) rotate(-45)" text-anchor="end" dy="3.2" style="font-size:9px">150</text>
<line x1="1454.50" y1="425.30" x2="1454.50" y2="722.3" stroke="#e5ecf3" stroke-width="1"/>
<text class="tk" transform="translate(1453.74 728.3) rotate(-45)" text-anchor="end" dy="3.2" style="font-size:9px">160</text>
<line x1="1472.50" y1="425.30" x2="1472.50" y2="722.3" stroke="#e5ecf3" stroke-width="1"/>
<text class="tk" transform="translate(1472.33 728.3) rotate(-45)" text-anchor="end" dy="3.2" style="font-size:9px">170</text>
<line x1="1491.50" y1="425.30" x2="1491.50" y2="722.3" stroke="#e5ecf3" stroke-width="1"/>
<text class="tk" transform="translate(1490.92 728.3) rotate(-45)" text-anchor="end" dy="3.2" style="font-size:9px">180</text>
<line x1="1509.50" y1="425.30" x2="1509.50" y2="722.3" stroke="#e5ecf3" stroke-width="1"/>
<text class="tk" transform="translate(1509.51 728.3) rotate(-45)" text-anchor="end" dy="3.2" style="font-size:9px">190</text>
<line x1="1528.50" y1="425.30" x2="1528.50" y2="722.3" stroke="#e5ecf3" stroke-width="1"/>
<text class="tk" transform="translate(1528.10 728.3) rotate(-45)" text-anchor="end" dy="3.2" style="font-size:9px">200</text>
<line x1="1547.50" y1="425.30" x2="1547.50" y2="722.3" stroke="#e5ecf3" stroke-width="1"/>
<text class="tk" transform="translate(1546.69 728.3) rotate(-45)" text-anchor="end" dy="3.2" style="font-size:9px">210</text>
<line x1="1565.50" y1="425.30" x2="1565.50" y2="722.3" stroke="#e5ecf3" stroke-width="1"/>
<text class="tk" transform="translate(1565.28 728.3) rotate(-45)" text-anchor="end" dy="3.2" style="font-size:9px">220</text>
<rect x="1156.60" y="433.36" width="424.22" height="41.5" fill="#3366cc"/>
<rect x="1156.60" y="491.58" width="18.59" height="41.5" fill="#dc3912"/>
<rect x="1156.60" y="549.80" width="16.73" height="41.5" fill="#ff9900"/>
<rect x="1156.60" y="608.02" width="9.29" height="41.5" fill="#109618"/>
<rect x="1156.60" y="666.24" width="5.58" height="41.5" fill="#990099"/>
<text class="tk" x="1147.5" y="445.51" text-anchor="end">Planned</text>
<text class="tk" x="1147.5" y="456.81" text-anchor="end">Donation</text>
<text class="tk" x="1147.5" y="468.11" text-anchor="end">Scheduled</text>
<text class="tk" x="1147.5" y="509.38" text-anchor="end">Planned</text>
<text class="tk" x="1147.5" y="520.68" text-anchor="end">Posted</text>
<text class="tk" x="1147.5" y="561.95" text-anchor="end">Planned</text>
<text class="tk" x="1147.5" y="573.25" text-anchor="end">Food</text>
<text class="tk" x="1147.5" y="584.55" text-anchor="end">Offered</text>
<text class="tk" x="1147.5" y="625.82" text-anchor="end">Planned</text>
<text class="tk" x="1147.5" y="637.12" text-anchor="end">Accepted</text>
<text class="tk" x="1147.5" y="684.04" text-anchor="end">Planned</text>
<text class="tk" x="1147.5" y="695.34" text-anchor="end">Transferred</text>
</svg>
</body></html>
